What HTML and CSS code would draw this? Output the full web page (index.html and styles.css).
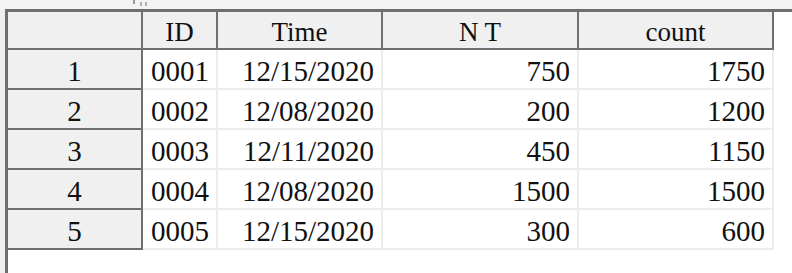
FILE: index.html
```html
<!DOCTYPE html>
<html>
<head>
<meta charset="utf-8">
<link rel="stylesheet" href="styles.css">
</head>
<body>
<div class="topbar"><span class="grip"></span></div>
<div class="view">
  <div class="grid">
    <div class="hc corner"></div>
    <div class="hc">ID</div>
    <div class="hc">Time</div>
    <div class="hc nt">NT</div>
    <div class="hc">count</div>

    <div class="rh">1</div><div class="dc left">0001</div><div class="dc">12/15/2020</div><div class="dc">750</div><div class="dc">1750</div>
    <div class="rh">2</div><div class="dc left">0002</div><div class="dc">12/08/2020</div><div class="dc">200</div><div class="dc">1200</div>
    <div class="rh">3</div><div class="dc left">0003</div><div class="dc">12/11/2020</div><div class="dc">450</div><div class="dc">1150</div>
    <div class="rh">4</div><div class="dc left">0004</div><div class="dc">12/08/2020</div><div class="dc">1500</div><div class="dc">1500</div>
    <div class="rh">5</div><div class="dc left">0005</div><div class="dc">12/15/2020</div><div class="dc">300</div><div class="dc">600</div>
  </div>
</div>
</body>
</html>
```

FILE: styles.css
```css
html, body {
  margin: 0;
  padding: 0;
  height: 100%;
}
body {
  background: #f0f0f0;
  font-family: "Liberation Serif", "DejaVu Serif", serif;
  color: #111;
  overflow: hidden;
}
.topbar {
  height: 9px;
  background: #f3f3f3;
  position: relative;
}
.grip {
  position: absolute;
  left: 133px;
  top: 0;
  width: 2px;
  height: 4px;
  background: #9a9a9a;
  box-shadow: 7px 2px 0 0 #b0b0b0, 12px 2px 0 0 #b0b0b0;
}
.view {
  margin-left: 5px;
  height: calc(100% - 9px);
  box-sizing: border-box;
  border-left: 3px solid #6f6f6f;
  border-top: 3px solid #6f6f6f;
  background: #ffffff;
}
.grid {
  display: grid;
  grid-template-columns: 135px 75px 165px 196px 195px;
  grid-template-rows: 38px repeat(5, 40px);
  width: max-content;
}
.hc, .rh, .dc {
  box-sizing: border-box;
  display: flex;
  align-items: center;
  padding-top: 4px;
  white-space: nowrap;
}
.hc {
  background: #f0f0f0;
  border-right: 2px solid #6f6f6f;
  border-bottom: 2px solid #6f6f6f;
  justify-content: center;
  font-size: 27px;
}
.nt {
  letter-spacing: 6px;
  padding-left: 6px;
}
.rh {
  background: #f0f0f0;
  border-right: 2px solid #6f6f6f;
  border-bottom: 2px solid #6f6f6f;
  justify-content: center;
  font-size: 29px;
}
.dc {
  background: #ffffff;
  border-right: 2px solid #ececec;
  border-bottom: 2px solid #ececec;
  justify-content: flex-end;
  padding-right: 7px;
  font-size: 29px;
}
.dc.left {
  justify-content: flex-start;
  padding-left: 8px;
  padding-right: 0;
}
```
